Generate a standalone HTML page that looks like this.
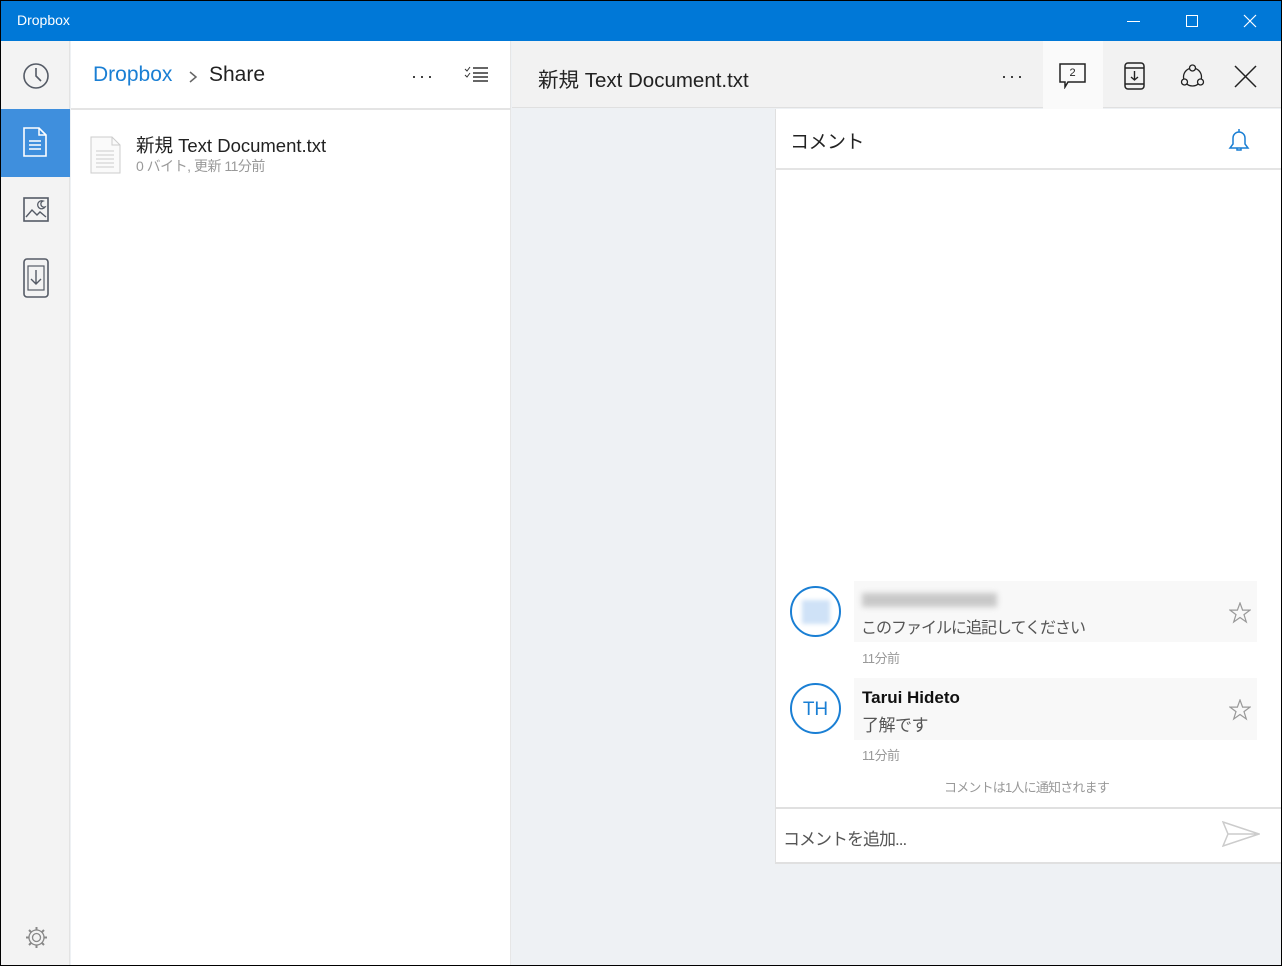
<!DOCTYPE html>
<html><head><meta charset="utf-8"><style>
*{margin:0;padding:0;box-sizing:border-box}
body{width:1282px;height:966px;overflow:hidden;background:#000;font-family:"Segoe UI","Liberation Sans","Noto Sans CJK JP",sans-serif;position:relative}
.a{position:absolute}
.jp{font-family:"Liberation Sans","Noto Sans CJK JP",sans-serif;letter-spacing:-0.5px}
</style></head><body>
<div class="a" style="left:1px;top:1px;width:1280px;height:964px;background:#eef1f4"></div>
<div class="a" style="left:1px;top:1px;width:1280px;height:40px;background:#0078d7"></div>
<div class="a" style="left:17px;top:12px;color:#fff;font-size:14px">Dropbox</div>
<div class="a" style="left:1127px;top:21px;width:13px;height:1px;background:#fff"></div>
<div class="a" style="left:1186px;top:15px;width:12px;height:12px;border:1px solid #fff"></div>
<svg class="a" style="left:1243px;top:14px" width="14" height="14"><path d="M1 1L13 13M13 1L1 13" stroke="#fff" stroke-width="1.2"/></svg>
<div class="a" style="left:1px;top:41px;width:69px;height:924px;background:#f3f3f3;border-right:1px solid #e3e3e3"></div>
<svg class="a" style="left:22px;top:62px" width="28" height="28"><circle cx="14" cy="14" r="12" fill="none" stroke="#555b66" stroke-width="1.6"/><path d="M14 6V14L19 19" fill="none" stroke="#555b66" stroke-width="1.6"/></svg>
<div class="a" style="left:1px;top:109px;width:69px;height:68px;background:#3f8fdd"></div>
<svg class="a" style="left:22px;top:126px" width="28" height="32"><path d="M2 2H17L24 9V30H2Z" fill="none" stroke="#fff" stroke-width="1.6"/><path d="M17 2V9H24M7 15H19M7 19H19M7 23H19" fill="none" stroke="#fff" stroke-width="1.5"/></svg>
<svg class="a" style="left:23px;top:196px" width="27" height="27"><rect x="1" y="2" width="24" height="23" fill="none" stroke="#555b66" stroke-width="1.6"/><path d="M3 21L9 14L14 19L17 16L23 21" fill="none" stroke="#555b66" stroke-width="1.4"/><path d="M20 5A4 4 0 1 0 22 11A3 3 0 0 1 20 5Z" fill="none" stroke="#555b66" stroke-width="1.3"/></svg>
<svg class="a" style="left:23px;top:258px" width="27" height="42"><rect x="1" y="1" width="24" height="38" rx="3" fill="none" stroke="#555b66" stroke-width="1.6"/><rect x="5" y="8" width="16" height="24" fill="none" stroke="#555b66" stroke-width="1.2"/><path d="M13 12V26M8 21L13 26L18 21" fill="none" stroke="#555b66" stroke-width="1.4"/></svg>
<svg class="a" style="left:24px;top:925px" width="25" height="25"><circle cx="12.5" cy="12.5" r="4" fill="none" stroke="#888" stroke-width="1.3"/><path d="M12.5 2V5.5M12.5 19.5V23M2 12.5H5.5M19.5 12.5H23M5 5L7.5 7.5M17.5 17.5L20 20M20 5L17.5 7.5M7.5 17.5L5 20" stroke="#888" stroke-width="2"/><circle cx="12.5" cy="12.5" r="7.5" fill="none" stroke="#888" stroke-width="1.3"/></svg>
<div class="a" style="left:71px;top:41px;width:440px;height:924px;background:#fff;border-right:1px solid #e6e6e6"></div>
<div class="a" style="left:71px;top:108px;width:440px;height:2px;background:#e4e4e4"></div>
<div class="a" style="left:93px;top:63px;font-size:21px;color:#1a7fd4">Dropbox</div>
<svg class="a" style="left:188px;top:70px" width="10" height="14"><path d="M2 2L8 7L2 12" fill="none" stroke="#666" stroke-width="1.5"/></svg>
<div class="a" style="left:209px;top:63px;font-size:21px;color:#222">Share</div>
<div class="a" style="left:411px;top:66px;font-size:18px;color:#222;letter-spacing:2px">···</div>
<svg class="a" style="left:464px;top:66px" width="25" height="16"><path d="M1 3L3 5L6 1M1 9L3 11L6 7" fill="none" stroke="#333" stroke-width="1"/><path d="M9 2H24M9 7H24M9 11H24M9 15H24" stroke="#333" stroke-width="1.5"/></svg>
<svg class="a" style="left:90px;top:136px" width="32" height="38"><path d="M1 1H22L30 9V37H1Z" fill="#fafafa" stroke="#ccc"/><path d="M22 1V9H30M6 15H24M6 19H24M6 23H24M6 27H24M6 31H24" fill="none" stroke="#ccc"/></svg>
<div class="a jp" style="left:136px;top:132px;font-size:18.5px;color:#222;letter-spacing:0">新規 Text Document.txt</div>
<div class="a jp" style="left:136px;top:156px;font-size:14px;color:#999">0 バイト, 更新 11分前</div>
<div class="a" style="left:512px;top:41px;width:769px;height:67px;background:#f2f2f2;border-bottom:1px solid #e0e0e0"></div>
<div class="a" style="left:1043px;top:41px;width:60px;height:68px;background:#fafafa"></div>
<div class="a jp" style="left:538px;top:63px;font-size:20.5px;color:#222;letter-spacing:0">新規 Text Document.txt</div>
<div class="a" style="left:1001px;top:66px;font-size:18px;color:#222;letter-spacing:2px">···</div>
<svg class="a" style="left:1059px;top:63px" width="28" height="26"><path d="M1 1H26V19H9L6 24V19H1Z" fill="none" stroke="#222" stroke-width="1.5"/><text x="13.5" y="13" font-size="11" text-anchor="middle" font-family="Liberation Sans" fill="#222">2</text></svg>
<svg class="a" style="left:1124px;top:62px" width="22" height="28"><rect x="1" y="1" width="19" height="26" rx="3" fill="none" stroke="#222" stroke-width="1.5"/><path d="M1 6H20M1 22H20M10.5 9V18M7 15L10.5 18L14 15" fill="none" stroke="#222" stroke-width="1.4"/></svg>
<svg class="a" style="left:1179px;top:62px" width="27" height="27"><circle cx="13.5" cy="15" r="9" fill="none" stroke="#222" stroke-width="1.3"/><circle cx="13.5" cy="6" r="3" fill="#f2f2f2" stroke="#222" stroke-width="1.3"/><circle cx="5.5" cy="20" r="3" fill="#f2f2f2" stroke="#222" stroke-width="1.3"/><circle cx="21.5" cy="20" r="3" fill="#f2f2f2" stroke="#222" stroke-width="1.3"/></svg>
<svg class="a" style="left:1234px;top:65px" width="23" height="23"><path d="M1 1L22 22M22 1L1 22" stroke="#222" stroke-width="1.5"/></svg>
<div class="a" style="left:775px;top:109px;width:506px;height:755px;background:#fff;border-left:1px solid #e0e0e0;border-bottom:2px solid #e0e0e0"></div>
<div class="a" style="left:775px;top:168px;width:506px;height:2px;background:#e4e4e4"></div>
<div class="a jp" style="left:790px;top:127px;font-size:19px;color:#222">コメント</div>
<svg class="a" style="left:1227px;top:127px" width="24" height="26"><path d="M3 21H21L18 17V11A6 6 0 0 0 6 11V17Z M10 21V23H14V21M12 2V5" fill="none" stroke="#1a7fd4" stroke-width="1.5"/></svg>
<div class="a" style="left:854px;top:581px;width:403px;height:61px;background:#f8f8f8"></div>
<div class="a" style="left:854px;top:678px;width:403px;height:62px;background:#f8f8f8"></div>
<div class="a" style="left:790px;top:586px;width:51px;height:51px;border-radius:50%;border:2px solid #1a7fd4"></div>
<div class="a" style="left:802px;top:600px;width:28px;height:24px;background:#cfe2f7;filter:blur(2px)"></div>
<div class="a" style="left:862px;top:593px;width:135px;height:14px;background:#c8c8c8;filter:blur(3px)"></div>
<div class="a jp" style="left:861px;top:614px;font-size:16px;color:#555;letter-spacing:-1px">このファイルに追記してください</div>
<div class="a jp" style="left:862px;top:648px;font-size:13px;color:#999">11分前</div>
<div class="a" style="left:790px;top:683px;width:51px;height:51px;border-radius:50%;border:2px solid #1a7fd4;color:#1a7fd4;font-size:19px;text-align:center;line-height:49px">TH</div>
<div class="a" style="left:862px;top:688px;font-size:17px;color:#111;font-weight:bold">Tarui Hideto</div>
<div class="a jp" style="left:862px;top:711px;font-size:17px;color:#555">了解です</div>
<div class="a jp" style="left:862px;top:745px;font-size:13px;color:#999">11分前</div>
<svg class="a" style="left:1229px;top:602px" width="22" height="22"><path d="M11 1L13.6 8.1H21L15 12.6L17.3 20L11 15.5L4.7 20L7 12.6L1 8.1H8.4Z" fill="none" stroke="#999" stroke-width="1.2"/></svg>
<svg class="a" style="left:1229px;top:699px" width="22" height="22"><path d="M11 1L13.6 8.1H21L15 12.6L17.3 20L11 15.5L4.7 20L7 12.6L1 8.1H8.4Z" fill="none" stroke="#999" stroke-width="1.2"/></svg>
<div class="a jp" style="left:944px;top:777px;font-size:13px;color:#999;letter-spacing:-0.8px">コメントは1人に通知されます</div>
<div class="a" style="left:776px;top:807px;width:505px;height:2px;background:#e0e0e0"></div>
<div class="a jp" style="left:783px;top:825px;font-size:17px;color:#555;letter-spacing:-1px">コメントを追加...</div>
<svg class="a" style="left:1222px;top:821px" width="38" height="26"><path d="M1 1L37 13L1 25L6 13Z M6 13H37" fill="none" stroke="#ccc" stroke-width="1.5"/></svg>
</body></html>
